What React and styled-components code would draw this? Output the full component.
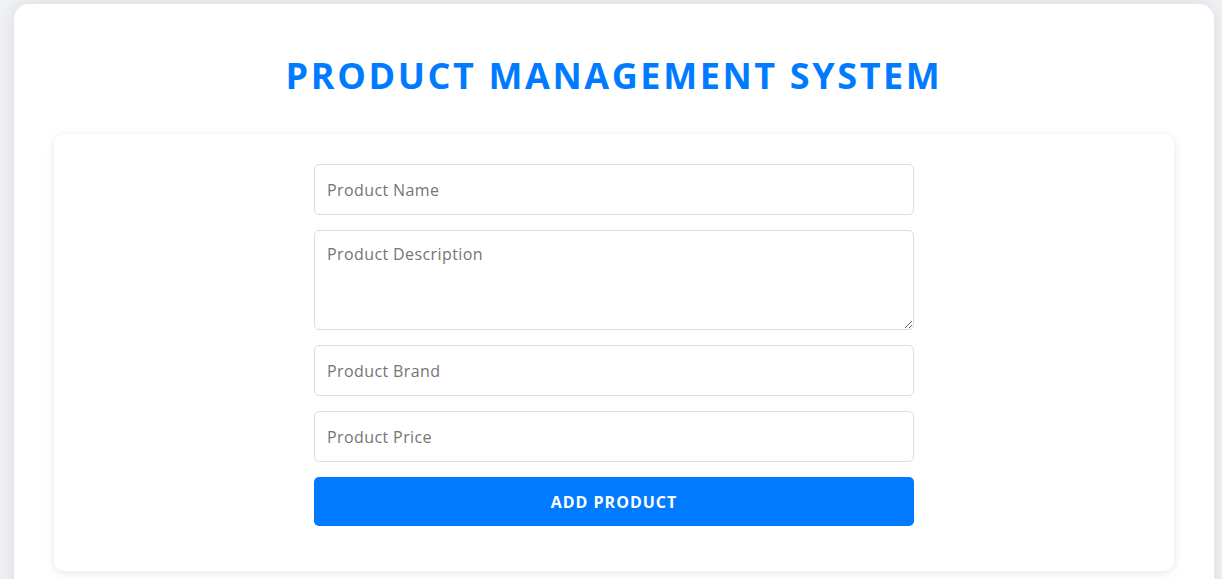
import React from 'react';
import styled, { createGlobalStyle } from 'styled-components';

const GlobalStyle = createGlobalStyle`
  body {
    margin: 0;
    background-color: #f0f2f5;
    font-family: "Open Sans", "Liberation Sans", sans-serif;
  }
`;

const Container = styled.div`
  width: 1200px;
  margin: 4px 8px 0 14px;
  padding: 40px 40px 40px;
  box-sizing: border-box;
  background-color: #fff;
  border-radius: 15px;
  box-shadow: 0 0 20px rgba(0, 0, 0, 0.1);
`;

const Heading = styled.h1`
  margin: 5px 0 31px;
  text-align: center;
  color: #007bff;
  font-size: 36px;
  font-weight: 700;
  line-height: 54px;
  letter-spacing: 2.6px;
  text-transform: uppercase;
`;

const Card = styled.div`
  background-color: #fff;
  border-radius: 10px;
  box-shadow: 0 2px 10px rgba(0, 0, 0, 0.1);
  padding: 30px 0 45px;
`;

const Form = styled.form`
  width: 600px;
  margin: 0 auto;
  display: flex;
  flex-direction: column;
  gap: 15px;
`;

const Input = styled.input`
  height: 51px;
  box-sizing: border-box;
  padding: 12px;
  border: 1px solid #ddd;
  border-radius: 5px;
  font-family: inherit;
  font-size: 16px;
  letter-spacing: 0.4px;
  color: #333;
  outline: none;

  &::placeholder {
    color: #757575;
  }
`;

const TextArea = styled(Input).attrs({ as: 'textarea' })`
  height: 100px;
  resize: vertical;
`;

const Button = styled.button`
  height: 49px;
  border: none;
  border-radius: 5px;
  background-color: #007bff;
  color: #fff;
  font-family: inherit;
  font-size: 16px;
  font-weight: 700;
  letter-spacing: 1px;
  text-transform: uppercase;
  cursor: pointer;
`;

export default function App() {
  return (
    <>
      <GlobalStyle />
      <Container>
        <Heading>Product Management System</Heading>
        <Card>
          <Form onSubmit={(e) => e.preventDefault()}>
            <Input type="text" placeholder="Product Name" />
            <TextArea placeholder="Product Description" />
            <Input type="text" placeholder="Product Brand" />
            <Input type="text" placeholder="Product Price" />
            <Button type="submit">Add Product</Button>
          </Form>
        </Card>
      </Container>
    </>
  );
}
